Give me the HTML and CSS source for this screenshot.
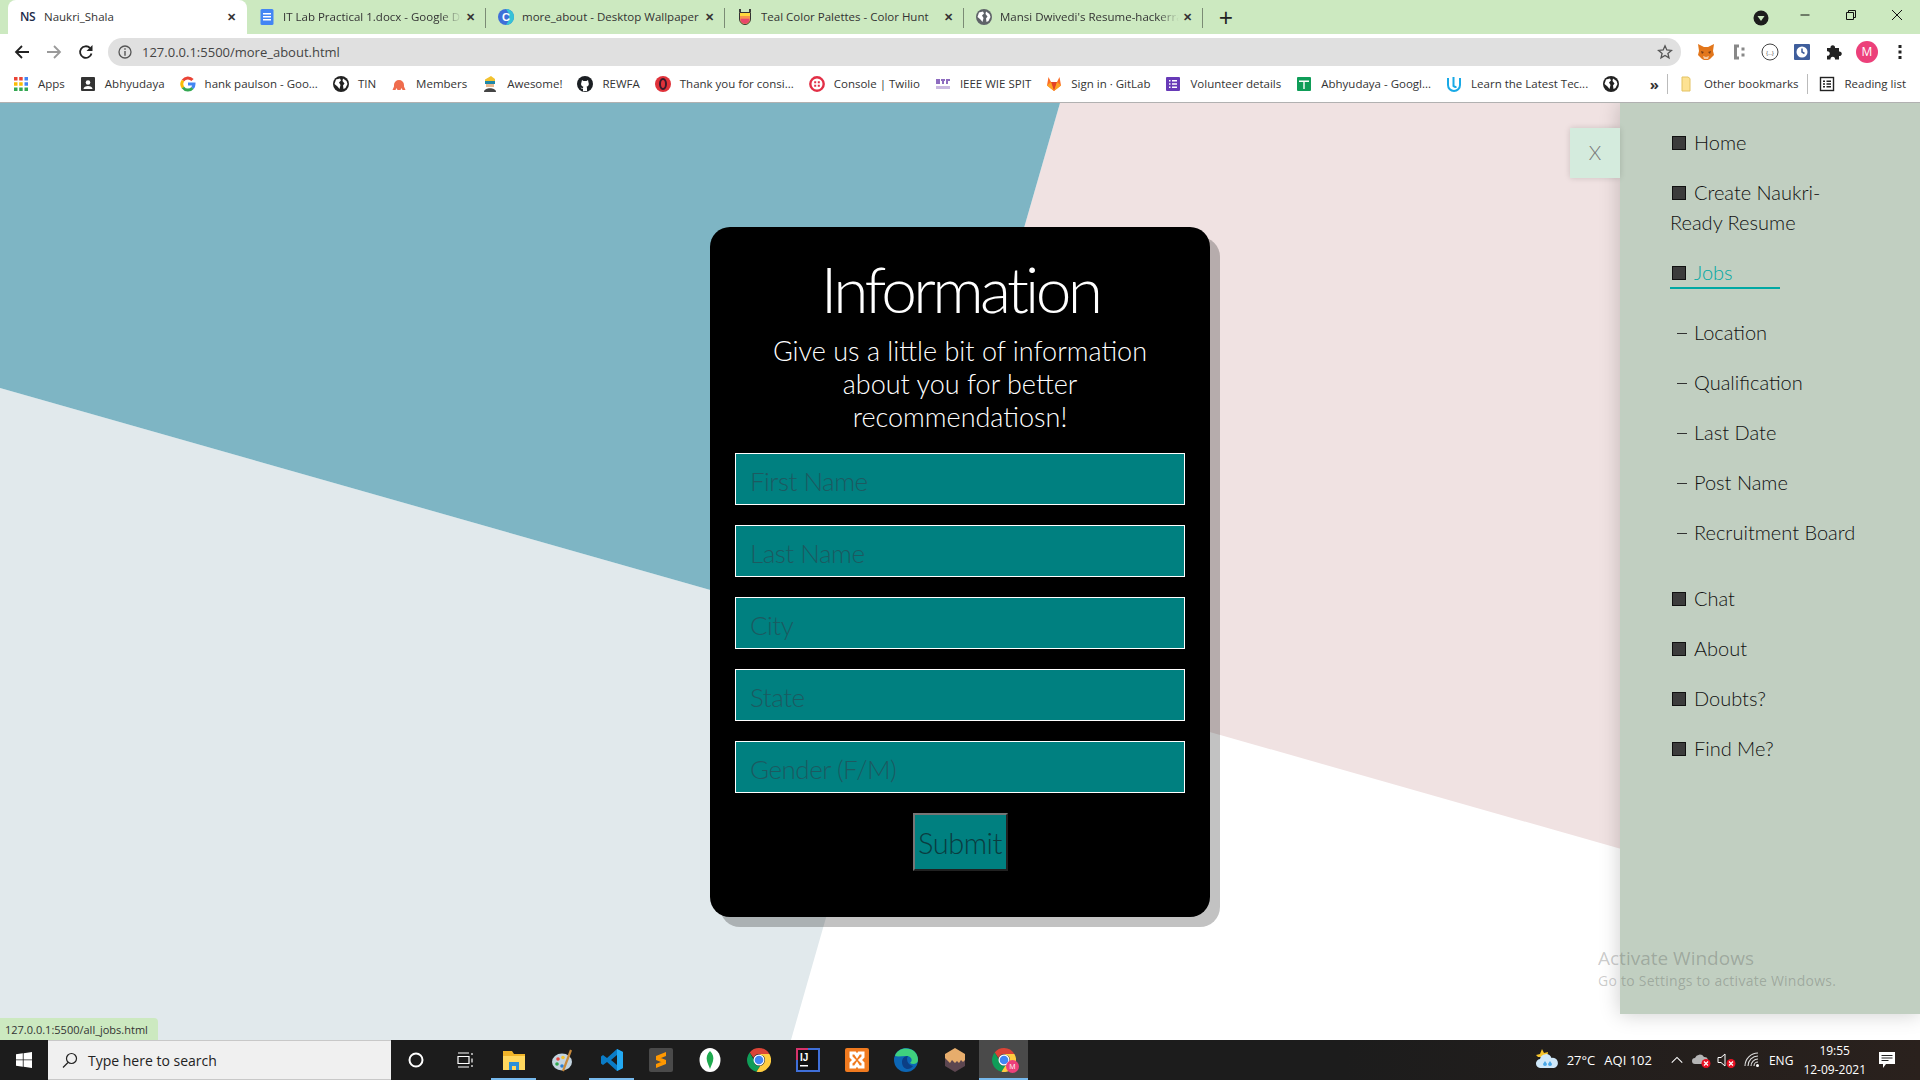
FILE: index.html
```html
<!DOCTYPE html>
<html lang="en">
<head>
    <meta charset="UTF-8">
    <title>Naukri_Shala</title>
    <link rel="stylesheet" href="styles.css">
</head>
<body>
    <svg class="defs" width="0" height="0">
        <symbol id="globe" viewBox="0 0 16 16"><circle cx="8" cy="8" r="8"/><path fill="#fff" d="M3 3.500 7 2.500 8 4.500 6 6.500 7.500 9 6.500 13 4.500 10.500 1.500 8ZM10 2.500 13.500 5 14.500 8 12.500 12 10.500 13 10 9.500 11.500 7.500 9.500 5Z"/></symbol>
        <symbol id="chrome" viewBox="0 0 24 24"><path fill="#db4437" d="M12 0a12 12 0 0 1 10.400 6H12a6 6 0 0 0-5.600 3.800L2.700 4.400A12 12 0 0 1 12 0Z"/><path fill="#0f9d58" d="M2.700 4.400 7 12a5 5 0 0 0 6.300 5.800L9.500 23.700A12 12 0 0 1 2.700 4.400Z"/><path fill="#ffcd40" d="M22.400 6a12 12 0 0 1-12.900 17.700L13.300 17.800A6 6 0 0 0 16.500 8L12 6Z"/><circle cx="12" cy="12" r="5.500" fill="#fff"/><circle cx="12" cy="12" r="4.300" fill="#4285f4"/></symbol>
    </svg>

    <div class="tabstrip">
        <div class="tab tab-active">
            <span class="ns-icon">NS</span>
            <span class="tab-title">Naukri_Shala</span>
            <span class="tab-close">&#10005;</span>
        </div>
        <div class="tab">
            <svg class="fav" viewBox="0 0 16 16"><rect x="1.500" width="13" height="16" rx="1.500" fill="#4285f4"/><path fill="#fff" d="M4 4h8v1.500H4zM4 7h8v1.500H4zM4 10h8v1.500H4z"/></svg>
            <span class="tab-title tab-fade">IT Lab Practical 1.docx - Google Docs</span>
            <span class="tab-close">&#10005;</span>
        </div>
        <div class="tab">
            <svg class="fav" viewBox="0 0 16 16"><circle cx="8" cy="8" r="8" fill="#3f6fd8"/><path fill="#35c3d6" d="M8 0a8 8 0 0 1 0 16 12 12 0 0 0 0-16Z"/><text x="8" y="11.500" text-anchor="middle" class="fav-text">C</text></svg>
            <span class="tab-title">more_about - Desktop Wallpaper</span>
            <span class="tab-close">&#10005;</span>
        </div>
        <div class="tab">
            <svg class="fav" viewBox="0 0 16 16"><path fill="#3b3b3b" d="M2 0h2v3H2zM12 0h2v3h-2z"/><path fill="#ffd83d" stroke="#333" d="M2.500 3.500h11V10a5.500 5.500 0 0 1-11 0Z"/><path fill="#f7934c" d="M3 7h10v2.500H3z"/><path fill="#e8466b" d="M3.300 9.500h9.400A5 5 0 0 1 8 15a5 5 0 0 1-4.700-5.500Z"/></svg>
            <span class="tab-title">Teal Color Palettes - Color Hunt</span>
            <span class="tab-close">&#10005;</span>
        </div>
        <div class="tab">
            <svg class="fav fill-gray"><use href="#globe"/></svg>
            <span class="tab-title tab-fade">Mansi Dwivedi's Resume-hackerrank</span>
            <span class="tab-close">&#10005;</span>
        </div>
        <span class="new-tab">+</span>
        <div class="window-controls">
            <svg class="win-menu" viewBox="0 0 16 16"><circle cx="8" cy="8" r="7.500" fill="#1d1d1d"/><path fill="#cce9c0" d="M4.500 6h7L8 11Z"/></svg>
            <svg class="win-btn" viewBox="0 0 12 12"><path stroke="#111" d="M1.500 6h9"/></svg>
            <svg class="win-btn" viewBox="0 0 12 12"><path fill="none" stroke="#111" d="M1.500 3.500h7v7h-7zM3.500 3.500v-2h7v7h-2"/></svg>
            <svg class="win-btn" viewBox="0 0 12 12"><path stroke="#111" d="M1 1l10 10M11 1 1 11"/></svg>
        </div>
    </div>

    <div class="toolbar">
        <svg class="nav-btn" viewBox="0 0 16 16"><path fill="none" stroke="#222" stroke-width="1.800" d="M15 8H2M8 2 2 8l6 6"/></svg>
        <svg class="nav-btn" viewBox="0 0 16 16"><path fill="none" stroke="#9a9a9a" stroke-width="1.800" d="M1 8h13M8 2l6 6-6 6"/></svg>
        <svg class="nav-btn" viewBox="0 0 16 16"><path fill="none" stroke="#222" stroke-width="1.800" d="M13.500 9.500A5.800 5.800 0 1 1 12 4"/><path fill="#222" d="M14.500 1v6h-6Z"/></svg>
        <div class="omnibox">
            <svg class="omni-info" viewBox="0 0 14 14"><circle cx="7" cy="7" r="6" fill="none" stroke="#555" stroke-width="1.300"/><path fill="#555" d="M6.300 3.300h1.400v1.400H6.300zM6.300 6h1.400v4.700H6.300z"/></svg>
            <span class="omni-url">127.0.0.1:5500/more_about.html</span>
            <svg class="omni-star" viewBox="0 0 16 16"><path fill="none" stroke="#555" stroke-width="1.300" d="M8 1.800 9.800 6l4.600.4-3.500 3 1.100 4.500L8 11.500l-4 2.400 1.100-4.500-3.500-3L6.200 6Z"/></svg>
        </div>
        <div class="ext-icons">
            <svg class="ext" viewBox="0 0 18 18"><path fill="#e2761b" d="M1 1l6 3h4l6-3-1 7 1 4-4 4-2 1H7l-2-1-4-4 1-4Z"/><path fill="#f6c8a0" d="M6 13l3 1 3-1-1 3H7Z"/><path fill="#763d16" d="M4 8l3 1-2 2ZM14 8l-3 1 2 2Z"/></svg>
            <svg class="ext" viewBox="0 0 18 18"><path fill="none" stroke="#888" stroke-width="3" d="M10 3H6.500v12H10"/><path fill="#888" d="M12.500 4.500h3v3h-3zM12.500 10.500h3v3h-3z"/></svg>
            <svg class="ext" viewBox="0 0 18 18"><circle cx="9" cy="9" r="8" fill="#fff" stroke="#444"/><text x="9" y="11.500" text-anchor="middle" class="ext-text">{...}</text></svg>
            <svg class="ext" viewBox="0 0 18 18"><rect x="1" y="1" width="16" height="16" rx="1" fill="#3f5e9c"/><circle cx="9" cy="9" r="5.500" fill="#fff"/><path fill="none" stroke="#3f5e9c" stroke-width="1.500" d="M9 5.500V9l2.500 1.500"/></svg>
            <svg class="ext" viewBox="0 0 18 18"><path fill="#222" d="M2 5h3.500a2.300 2.300 0 1 1 4.500 0H14v3.500a2.300 2.300 0 1 1 0 4.500V16.500H10a2.300 2.300 0 1 0-4.500 0H2v-3.800a2.300 2.300 0 1 0 0-4.500Z"/></svg>
            <span class="avatar">M</span>
            <svg class="ext" viewBox="0 0 18 18"><path fill="#222" d="M7.500 2h3v3h-3zM7.500 7.500h3v3h-3zM7.500 13h3v3h-3z"/></svg>
        </div>
    </div>

    <div class="bookmarks">
        <div class="bm">
            <svg class="fav" viewBox="0 0 16 16"><path fill="#ea4335" d="M1 1h3.500v3.500H1zM6.200 1h3.500v3.500H6.200z"/><path fill="#4285f4" d="M11.500 1H15v3.500h-3.500zM11.500 6.200H15v3.500h-3.500z"/><path fill="#fbbc05" d="M1 6.200h3.500v3.500H1zM6.200 6.200h3.500v3.500H6.200z"/><path fill="#34a853" d="M1 11.500h3.500V15H1zM6.200 11.500h3.500V15H6.200zM11.500 11.500H15V15h-3.500z"/></svg>
            <span>Apps</span>
        </div>
        <div class="bm">
            <svg class="fav" viewBox="0 0 16 16"><rect x="1" y="1" width="14" height="14" rx="1" fill="#333"/><circle cx="8" cy="6.500" r="2.300" fill="#fff"/><path fill="#fff" d="M3.500 13c0-4 9-4 9 0Z"/></svg>
            <span>Abhyudaya</span>
        </div>
        <div class="bm">
            <svg class="fav" viewBox="0 0 16 16"><g fill="none" stroke-width="3"><path stroke="#ea4335" d="M3 4.500A6 6 0 0 1 12.500 4"/><path stroke="#fbbc05" d="M3 4.500a6 6 0 0 0 0 7"/><path stroke="#34a853" d="M3 11.500a6 6 0 0 0 9.500.5"/><path stroke="#4285f4" d="M12.500 12A6 6 0 0 0 14 8H8"/></g></svg>
            <span>hank paulson - Goo...</span>
        </div>
        <div class="bm"><svg class="fav fill-dark"><use href="#globe"/></svg><span>TIN</span></div>
        <div class="bm">
            <svg class="fav" viewBox="0 0 16 16"><path fill="#ef6c4d" d="M3 9a5 5 0 0 1 10 0v1.500l1.500 3.500h-3l-1-2-1 2h-3l-1-2-1 2H1.500L3 10.500Z"/></svg>
            <span>Members</span>
        </div>
        <div class="bm">
            <svg class="fav" viewBox="0 0 16 16"><path fill="#f2c230" d="M3 3.500 9 0l4 3v3H3Z"/><rect x="3" y="5" width="10" height="3" fill="#1e88a8"/><path fill="#e9b98f" d="M4 8h8v3H4Z"/><path fill="#444" d="M2 16c0-5 12-5 12 0Z"/></svg>
            <span>Awesome!</span>
        </div>
        <div class="bm">
            <svg class="fav" viewBox="0 0 16 16"><circle cx="8" cy="8" r="8" fill="#1b1f23"/><path fill="#fff" d="M5 4l1.500 1h3L11 4l.5 2.500c1 2-.2 4-2 4.300.5.500.5 1 .5 2.200v2l-4 .2v-2.200C4.500 13 4 12 3.500 11.500 5 12 5.500 12.500 6 12.200c0-.5 0-1 .4-1.400-1.800-.3-3-2.300-2-4.300Z"/></svg>
            <span>REWFA</span>
        </div>
        <div class="bm">
            <svg class="fav" viewBox="0 0 16 16"><circle cx="8" cy="8" r="8" fill="#e0323a"/><ellipse cx="8" cy="8" rx="3" ry="5" fill="none" stroke="#3b1a2c" stroke-width="2"/></svg>
            <span>Thank you for consi...</span>
        </div>
        <div class="bm">
            <svg class="fav" viewBox="0 0 16 16"><circle cx="8" cy="8" r="6.700" fill="none" stroke="#e22f46" stroke-width="2.400"/><path fill="#e22f46" d="M5.200 5.200h2v2h-2zM8.800 5.200h2v2h-2zM5.200 8.800h2v2h-2zM8.800 8.800h2v2h-2z"/></svg>
            <span>Console | Twilio</span>
        </div>
        <div class="bm">
            <svg class="fav" viewBox="0 0 16 16"><path fill="#8e6cc0" d="M1 3h4v5H1zM6 3h4v2H6zM7 5h2v3H7zM11 3h4v2h-4zM11 5h2v3h-2z"/><path fill="#c9b8e0" d="M1 10h14v3H1z"/></svg>
            <span>IEEE WIE SPIT</span>
        </div>
        <div class="bm">
            <svg class="fav" viewBox="0 0 16 16"><path fill="#fc6d26" d="M8 15 1 9.500 2.500 1 5 6h6l2.500-5L15 9.500Z"/><path fill="#e24329" d="M8 15 5 6h6Z"/><path fill="#fca326" d="M1 9.500 5 6l3 9ZM15 9.500 11 6l-3 9Z"/></svg>
            <span>Sign in &middot; GitLab</span>
        </div>
        <div class="bm">
            <svg class="fav" viewBox="0 0 16 16"><rect x="1" y="1" width="14" height="14" rx="1" fill="#673ab7"/><path fill="#fff" d="M4 4h1.500v1.500H4zM7 4h5v1.500H7zM4 7.200h1.500v1.500H4zM7 7.200h5v1.500H7zM4 10.500h1.500V12H4zM7 10.500h5V12H7z"/></svg>
            <span>Volunteer details</span>
        </div>
        <div class="bm">
            <svg class="fav" viewBox="0 0 16 16"><rect x="1" y="1" width="14" height="14" rx="1" fill="#0f9d58"/><path fill="#fff" d="M3 4.500h10V6H8.700v7H7.300V6H3z"/></svg>
            <span>Abhyudaya - Googl...</span>
        </div>
        <div class="bm">
            <svg class="fav" viewBox="0 0 16 16"><path fill="none" stroke="#18a9e6" stroke-width="2" d="M2 2v7a6 6 0 0 0 12 0V2M7.500 1v9a3.500 3.500 0 0 0 3 1"/></svg>
            <span>Learn the Latest Tec...</span>
        </div>
        <div class="bm"><svg class="fav fill-dark"><use href="#globe"/></svg></div>
        <div class="bm-right">
            <span class="bm-more">&raquo;</span>
            <span class="bm-sep"></span>
            <div class="bm">
                <svg class="fav" viewBox="0 0 16 16"><path fill="#fde293" stroke="#e3c262" d="M3 1h6l2 1.500V15H3Z"/></svg>
                <span>Other bookmarks</span>
            </div>
            <span class="bm-sep"></span>
            <div class="bm">
                <svg class="fav" viewBox="0 0 16 16"><rect x="1.500" y="1.500" width="13" height="13" fill="none" stroke="#222" stroke-width="1.400"/><path fill="#222" d="M4 4.500h2v1.500H4zM7.500 4.500H12v1.500H7.500zM4 7.300h2v1.500H4zM7.500 7.300H12v1.500H7.500zM4 10h2v1.500H4zM7.500 10H12v1.500H7.500z"/></svg>
                <span>Reading list</span>
            </div>
        </div>
    </div>

    <div class="page">
        <svg class="page-bg" viewBox="0 0 1920 937" preserveAspectRatio="none">
            <rect width="1920" height="937" fill="#fff"/>
            <path fill="#e1e9ec" d="M0 285 L904 542 L791 937 H0Z"/>
            <path fill="#f0e2e2" d="M1060 0 H1920 V831 L904 542Z"/>
            <path fill="#7eb5c4" d="M0 0 H1060 L904 542 L0 285Z"/>
        </svg>

        <div class="card">
            <h1>Information</h1>
            <p class="lead">Give us a little bit of information about you for better recommendatiosn!</p>
            <form class="info-form">
                <input type="text" placeholder="First Name">
                <input type="text" placeholder="Last Name">
                <input type="text" placeholder="City">
                <input type="text" placeholder="State">
                <input type="text" placeholder="Gender (F/M)">
                <button type="button">Submit</button>
            </form>
        </div>

        <div class="sidebar">
            <div class="close-btn">X</div>
            <ul class="menu">
                <li>Home</li>
                <li>Create Naukri-Ready Resume</li>
                <li class="active">Jobs</li>
                <li class="sub-wrap">
                    <ul class="submenu">
                        <li>Location</li>
                        <li>Qualification</li>
                        <li>Last Date</li>
                        <li>Post Name</li>
                        <li>Recruitment Board</li>
                    </ul>
                </li>
                <li>Chat</li>
                <li>About</li>
                <li>Doubts?</li>
                <li>Find Me?</li>
            </ul>
        </div>

        <div class="status-bubble">127.0.0.1:5500/all_jobs.html</div>
        <div class="watermark">
            <div class="wm-title">Activate Windows</div>
            <div class="wm-sub">Go to Settings to activate Windows.</div>
        </div>
    </div>

    <div class="taskbar">
        <div class="start">
            <svg class="start-icon" viewBox="0 0 16 16"><path fill="#fff" d="M0 2.300 6.800 1.300V7.500H0ZM7.600 1.200 16 0V7.500H7.600ZM0 8.300H6.800V14.700L0 13.700ZM7.600 8.300H16V16L7.600 14.800Z"/></svg>
        </div>
        <div class="search">
            <svg class="search-icon" viewBox="0 0 16 16"><circle cx="9.500" cy="6.500" r="5" fill="none" stroke="#222" stroke-width="1.200"/><path stroke="#222" stroke-width="1.300" d="M6 10.500 1 15.500"/></svg>
            <span>Type here to search</span>
        </div>
        <div class="tb-item"><svg class="tb-icon" viewBox="0 0 24 24"><circle cx="12" cy="12" r="6.500" fill="none" stroke="#fff" stroke-width="2"/></svg></div>
        <div class="tb-item"><svg class="tb-icon" viewBox="0 0 24 24"><path fill="none" stroke="#fff" stroke-width="1.200" d="M5 8.500h11v7H5zM5 5h11M5 19h11M19 5v2M19 10.500v4M19 17v2"/></svg></div>
        <div class="tb-item tb-open"><svg class="tb-icon" viewBox="0 0 24 24"><path fill="#f0b429" d="M1 3h9l2 3h11v16H1Z"/><path fill="#ffd75e" d="M1 8h22v14H1Z"/><path fill="#2a8fd8" d="M7 14h10v8h-3v-4h-4v4H7Z"/></svg></div>
        <div class="tb-item"><svg class="tb-icon" viewBox="0 0 24 24"><ellipse cx="11" cy="14" rx="10" ry="8.500" fill="#c3d4e0"/><circle cx="7" cy="11" r="1.800" fill="#e8483f"/><circle cx="12" cy="9.500" r="1.800" fill="#f4c430"/><circle cx="6" cy="16" r="1.800" fill="#2fa84f"/><circle cx="11" cy="18" r="1.800" fill="#2b7fd4"/><path stroke="#c98a3c" stroke-width="2.200" d="M12 23 20 2"/></svg></div>
        <div class="tb-item tb-open"><svg class="tb-icon" viewBox="0 0 24 24"><path fill="#0a7cc7" d="M17 1 23 4v16l-6 3-10-9-4 3-2-1.500V8.500L3 7l4 3ZM17 7l-6 5 6 5Z"/><path fill="#23a9f2" d="M17 1 23 4v16l-6 3Z"/></svg></div>
        <div class="tb-item"><svg class="tb-icon" viewBox="0 0 24 24"><rect width="24" height="24" rx="2" fill="#4a4a4a"/><path fill="#ff9800" d="M7 8 17 4v4L7 12ZM7 16l10-4v4L7 20ZM7 8l10 4v4L7 12Z"/></svg></div>
        <div class="tb-item"><svg class="tb-icon" viewBox="0 0 24 24"><ellipse cx="12" cy="12" rx="10.500" ry="12" fill="#fff"/><path fill="#1faa4f" d="M12 3c3 3 4 6 3 10-.5 2-2 5-3 8-1-3-2.500-6-3-8-1-4 0-7 3-10Z"/></svg></div>
        <div class="tb-item"><svg class="tb-icon"><use href="#chrome"/></svg></div>
        <div class="tb-item"><svg class="tb-icon" viewBox="0 0 24 24"><rect x="1" y="1" width="22" height="22" fill="#111" stroke="#3f6fd8" stroke-width="2"/><path fill="none" stroke="#d6336c" stroke-width="2" d="M1 12V1h11"/><text x="4" y="13" class="ij-text">IJ</text><path fill="#fff" d="M4 17h8v1.500H4z"/></svg></div>
        <div class="tb-item"><svg class="tb-icon" viewBox="0 0 24 24"><rect width="24" height="24" rx="2" fill="#f07a1f"/><path fill="none" stroke="#fff" stroke-width="3" d="M6 5h4l2 3 2-3h4v4l-3 3 3 3v4h-4l-2-3-2 3H6v-4l3-3-3-3Z"/></svg></div>
        <div class="tb-item"><svg class="tb-icon" viewBox="0 0 24 24"><circle cx="12" cy="12" r="12" fill="#0c66b5"/><path fill="#3fd07e" d="M1 8C4-3 24-2 24 12c0 4-5 5-8 3 3-2 2-7-4-7-4 0-8 1-11 0Z"/><path fill="#0c3f85" d="M8 14c0-4 3-6 6-6-2 2-1 9 5 10-3 5-11 4-11-4Z"/></svg></div>
        <div class="tb-item"><svg class="tb-icon" viewBox="0 0 24 24"><path fill="#5c4650" d="M2 6 12 12l10-6v12L12 24 2 18Z"/><path fill="#e7ad6c" d="M12 0l10 6v6l-2 2-2-2-2 3-2-2-2 2-3-3-2 3-5-5V6Z"/></svg></div>
        <div class="tb-item tb-active">
            <svg class="tb-icon"><use href="#chrome"/></svg>
            <span class="tb-badge">M</span>
        </div>

        <div class="tray">
            <svg class="tray-weather" viewBox="0 0 24 24"><path fill="#f7c52d" d="M7 1l2 4 4-1-1 5H3l-2-2 4-1Z"/><path fill="#cfe8fa" d="M6 20a4.500 4.500 0 0 1-1-9 6 6 0 0 1 11.500-1A5 5 0 0 1 19 20Z"/><path fill="#4aa8e8" d="M10 13l2 3a2 2 0 0 1-4 0ZM15 13l2 3a2 2 0 0 1-4 0Z"/></svg>
            <span class="tray-temp">27&deg;C</span>
            <span class="tray-aqi">AQI 102</span>
            <svg class="tray-icon tray-caret" viewBox="0 0 16 16"><path fill="none" stroke="#fff" stroke-width="1.200" d="M2 11 8 5l6 6"/></svg>
            <svg class="tray-icon" viewBox="0 0 20 16"><path fill="#b5b5b5" d="M3 12a3 3 0 0 1 0-6 5 5 0 0 1 9-1 4 4 0 0 1 3 7Z"/><circle cx="14" cy="11.500" r="4.500" fill="#e81123"/><path stroke="#fff" stroke-width="1.200" d="M12 9.500l4 4M16 9.500l-4 4"/></svg>
            <svg class="tray-icon" viewBox="0 0 20 16"><path fill="none" stroke="#fff" d="M1 5.500h3L8 2v12L4 10.500H1Z"/><circle cx="14" cy="11.500" r="4.500" fill="#e81123"/><path stroke="#fff" stroke-width="1.200" d="M12 9.500l4 4M16 9.500l-4 4"/></svg>
            <svg class="tray-icon" viewBox="0 0 16 16"><path fill="none" stroke="#ddd" stroke-width="1.100" d="M1 14A13 13 0 0 1 14 1M4 14A10 10 0 0 1 14 4M7 14a7 7 0 0 1 7-7M10 14a4 4 0 0 1 4-4"/><circle cx="13.500" cy="13.500" r="1.500" fill="#fff"/></svg>
            <span class="tray-lang">ENG</span>
            <div class="tray-clock"><span>19:55</span><span>12-09-2021</span></div>
            <svg class="tray-note" viewBox="0 0 18 18"><path fill="#fff" d="M1 1h16v12H8l-3 4v-4H1Z"/><path stroke="#222" d="M3.500 4.500h11M3.500 7h11M3.500 9.500h7"/></svg>
        </div>
    </div>
</body>
</html>
```

FILE: styles.css
```css
* {
    box-sizing: border-box;
}
html, body {
    margin: 0;
    height: 100%;
    overflow: hidden;
}
body {
    display: flex;
    flex-direction: column;
    width: 1920px;
    height: 1080px;
    font-family: "Open Sans", "Noto Sans", sans-serif;
    background-color: #fff;
}
.defs {
    position: absolute;
}
.fav {
    width: 16px;
    height: 16px;
    flex: none;
}
.fill-gray {
    fill: #5f6368;
}
.fill-dark {
    fill: #222;
}
.fav-text {
    font: 700 11px "Liberation Sans", sans-serif;
    fill: #fff;
}

/* browser tabs */
.tabstrip {
    display: flex;
    align-items: flex-end;
    height: 34px;
    padding-left: 8px;
    background-color: #cce9c0;
    flex: none;
}
.tab {
    position: relative;
    display: flex;
    align-items: center;
    gap: 8px;
    width: 239px;
    height: 34px;
    padding: 0 8px 1px 12px;
    font-size: 11.500px;
    color: #333;
}
.tab::after {
    content: "";
    position: absolute;
    right: 0;
    top: 8px;
    height: 20px;
    border-right: 1px solid #7b8b75;
}
.tab-active {
    background-color: #fff;
    border-radius: 8px 8px 0 0;
}
.tab-active::after {
    display: none;
}
.ns-icon {
    width: 16px;
    flex: none;
    font-size: 12px;
    font-weight: 600;
    color: #1c2a4a;
    letter-spacing: -0.5px;
}
.tab-title {
    flex: 1;
    min-width: 0;
    overflow: hidden;
    white-space: nowrap;
}
.tab-fade {
    -webkit-mask-image: linear-gradient(to right, #000 88%, transparent);
    mask-image: linear-gradient(to right, #000 88%, transparent);
}
.tab-close {
    width: 16px;
    margin-left: -8px;
    flex: none;
    text-align: center;
    font-size: 11px;
    font-weight: 700;
    color: #333;
}
.new-tab {
    width: 46px;
    text-align: center;
    font-size: 25px;
    line-height: 34px;
    color: #222;
    align-self: center;
}
.window-controls {
    display: flex;
    align-items: center;
    margin-left: auto;
    height: 34px;
    padding-right: 17px;
    gap: 34px;
}
.win-menu {
    width: 16px;
    height: 16px;
    margin: 1px -4px 0 0;
}
.win-btn {
    width: 12px;
    height: 12px;
    margin-top: -4px;
}

/* address bar */
.toolbar {
    display: flex;
    align-items: center;
    height: 32px;
    padding: 4px 0 0 14px;
    background-color: #fff;
    flex: none;
}
.nav-btn {
    width: 16px;
    height: 16px;
    margin-right: 16px;
}
.omnibox {
    display: flex;
    align-items: center;
    width: 1573px;
    height: 28px;
    margin-left: -2px;
    padding: 0 8px 0 10px;
    border-radius: 14px;
    background-color: #e0e0e0;
}
.omni-info {
    width: 14px;
    height: 14px;
    margin-right: 10px;
}
.omni-url {
    flex: 1;
    font-size: 13px;
    color: #444;
}
.omni-star {
    width: 16px;
    height: 16px;
}
.ext-icons {
    display: flex;
    align-items: center;
    gap: 14px;
    margin-left: 16px;
}
.ext {
    width: 18px;
    height: 18px;
}
.ext-text {
    font: 5px "Liberation Sans", sans-serif;
    fill: #333;
}
.avatar {
    width: 22px;
    height: 22px;
    margin: 0 -1px;
    border-radius: 50%;
    background-color: #ec407a;
    color: #fff;
    font-size: 12px;
    line-height: 22px;
    text-align: center;
}

/* bookmarks bar */
.bookmarks {
    display: flex;
    align-items: center;
    height: 37px;
    padding: 0 14px 1px 13px;
    border-bottom: 1px solid #b1b1b1;
    background-color: #fff;
    font-size: 11.500px;
    color: #333;
    flex: none;
}
.bm {
    display: flex;
    align-items: center;
    gap: 9px;
    padding-right: 15px;
    white-space: nowrap;
}
.bm-right {
    display: flex;
    align-items: center;
    margin-left: auto;
}
.bm-right .bm {
    padding-right: 9px;
}
.bm-right .bm:last-child {
    padding-right: 0;
}
.bm-more {
    margin-right: 8px;
    font-size: 15px;
    font-weight: 700;
}
.bm-sep {
    height: 20px;
    margin-right: 11px;
    border-right: 1px solid #bbb;
}

/* page canvas */
.page {
    position: relative;
    flex: 1;
    display: flex;
    justify-content: center;
    align-items: flex-start;
    padding-top: 124px;
    overflow: hidden;
}
.page-bg {
    position: absolute;
    left: 0;
    top: 0;
    width: 100%;
    height: 100%;
}
.card {
    position: relative;
    display: flex;
    flex-direction: column;
    align-items: center;
    width: 500px;
    height: 690px;
    padding: 30px 25px 0;
    border-radius: 20px;
    background-color: #000;
    box-shadow: 10px 10px 0 rgba(0, 0, 0, 0.24);
    font-family: Lato, sans-serif;
    font-weight: 300;
    color: #fff;
    text-align: center;
}
.card h1 {
    margin: 0 0 10px;
    height: 67px;
    font-size: 64px;
    line-height: 64px;
    font-weight: 300;
    letter-spacing: -3.700px;
}
.lead {
    margin: 0 0 20px;
    width: 400px;
    font-size: 27px;
    line-height: 33px;
}
.info-form {
    display: flex;
    flex-direction: column;
    align-items: center;
    gap: 20px;
    width: 450px;
}
.info-form input {
    width: 100%;
    height: 52px;
    padding: 4px 14px 0;
    border: 1px solid #fff;
    background-color: #008080;
    font-family: Lato, sans-serif;
    font-weight: 300;
    font-size: 26px;
    letter-spacing: -0.500px;
    outline: none;
}
.info-form input::placeholder {
    color: #1c5a60;
    opacity: 1;
}
.info-form button {
    width: 95px;
    height: 58px;
    padding: 0;
    border: 2px outset #767676;
    background-color: #008080;
    font-family: Lato, sans-serif;
    font-weight: 300;
    font-size: 29px;
    letter-spacing: -0.500px;
    color: #0b3c40;
}

/* side menu */
.sidebar {
    position: absolute;
    right: 0;
    top: 0;
    width: 300px;
    height: 911px;
    padding-top: 24px;
    background-color: #c1cfc1;
    box-shadow: 0 0 20px rgba(0, 0, 0, 0.2);
    font-family: Lato, sans-serif;
    font-weight: 300;
    font-size: 20px;
    color: #111;
}
.close-btn {
    position: absolute;
    left: -50px;
    top: 25px;
    width: 50px;
    height: 50px;
    background-color: #d4ebdd;
    box-shadow: 0 0 6px rgba(0, 0, 0, 0.15);
    color: #777;
    font-size: 20px;
    line-height: 49px;
    text-align: center;
}
.menu, .submenu {
    list-style: none;
    margin: 0;
    padding: 0;
}
.menu {
    padding-left: 50px;
    width: 220px;
}
.menu > li {
    margin-bottom: 20px;
    line-height: 30px;
}
.menu > li::before {
    content: "";
    display: inline-block;
    width: 12px;
    height: 12px;
    margin: 0 8px 0 2px;
    border: 1px solid #111;
    background-color: #3c3c3c;
}
.menu > li.sub-wrap {
    margin: 28px 0 36px;
    padding: 0;
}
.menu > li.sub-wrap::before {
    display: none;
}
.menu > li.active {
    width: 110px;
    height: 32px;
    margin-bottom: 0;
    border-bottom: 2px solid #00a8a3;
    color: #00a8a3;
}
.submenu li {
    margin-bottom: 20px;
    line-height: 30px;
    white-space: nowrap;
}
.submenu li:last-child {
    margin-bottom: 0;
}
.submenu li::before {
    content: "";
    display: inline-block;
    width: 10px;
    height: 1px;
    margin: 0 7px 6px 7px;
    background-color: #333;
}

.status-bubble {
    position: absolute;
    left: 0;
    bottom: 0;
    width: 158px;
    height: 22px;
    padding: 0 0 0 5px;
    border-radius: 0 4px 0 0;
    background-color: #cce9c0;
    font-size: 11px;
    line-height: 23px;
    color: #333;
    white-space: nowrap;
}
.watermark {
    position: absolute;
    left: 1598px;
    top: 842px;
    color: rgba(60, 60, 60, 0.27);
    white-space: nowrap;
}
.wm-title {
    font-size: 19px;
    line-height: 26px;
}
.wm-sub {
    font-size: 14px;
    line-height: 20px;
    letter-spacing: 0.250px;
}

/* windows taskbar */
.taskbar {
    display: flex;
    align-items: stretch;
    height: 40px;
    background: linear-gradient(to right, #1c1c1c 70%, #2a211d);
    color: #fff;
    flex: none;
}
.start {
    display: flex;
    align-items: center;
    justify-content: center;
    width: 48px;
}
.start-icon {
    width: 16px;
    height: 16px;
}
.search {
    display: flex;
    align-items: center;
    gap: 10px;
    width: 343px;
    padding-left: 14px;
    border: 1px solid #c8c8c8;
    border-width: 1px 0;
    background-color: #f0f0f0;
    color: #222;
    font-size: 14px;
}
.search-icon {
    width: 16px;
    height: 16px;
}
.tb-item {
    position: relative;
    display: flex;
    align-items: center;
    justify-content: center;
    width: 49px;
}
.tb-icon {
    width: 24px;
    height: 24px;
}
.tb-open::after, .tb-active::after {
    content: "";
    position: absolute;
    left: 2px;
    right: 2px;
    bottom: 0;
    height: 2px;
    background-color: #76b9ed;
}
.tb-active {
    background-color: #4a4a4a;
}
.tb-active::after {
    left: 0;
    right: 0;
}
.tb-badge {
    position: absolute;
    left: 27px;
    top: 20px;
    width: 13px;
    height: 13px;
    border-radius: 50%;
    background-color: #ec407a;
    font-size: 7px;
    line-height: 13px;
    text-align: center;
}
.ij-text {
    font: 700 10px "Liberation Sans", sans-serif;
    fill: #fff;
}
.tray {
    display: flex;
    align-items: center;
    margin-left: auto;
    padding-right: 24px;
    font-size: 13px;
}
.tray-weather {
    width: 24px;
    height: 24px;
    margin-right: 8px;
}
.tray-temp {
    margin-right: 9px;
}
.tray-aqi {
    margin-right: 18px;
}
.tray-icon {
    width: 20px;
    height: 16px;
    margin-right: 5px;
}
.tray-caret {
    width: 14px;
    margin-right: 8px;
}
.tray-lang {
    margin: 0 10px 0 2px;
    font-size: 12px;
}
.tray-clock {
    display: flex;
    flex-direction: column;
    align-items: center;
    margin-right: 12px;
    font-size: 12px;
    line-height: 19px;
}
.tray-note {
    width: 18px;
    height: 18px;
}
```
